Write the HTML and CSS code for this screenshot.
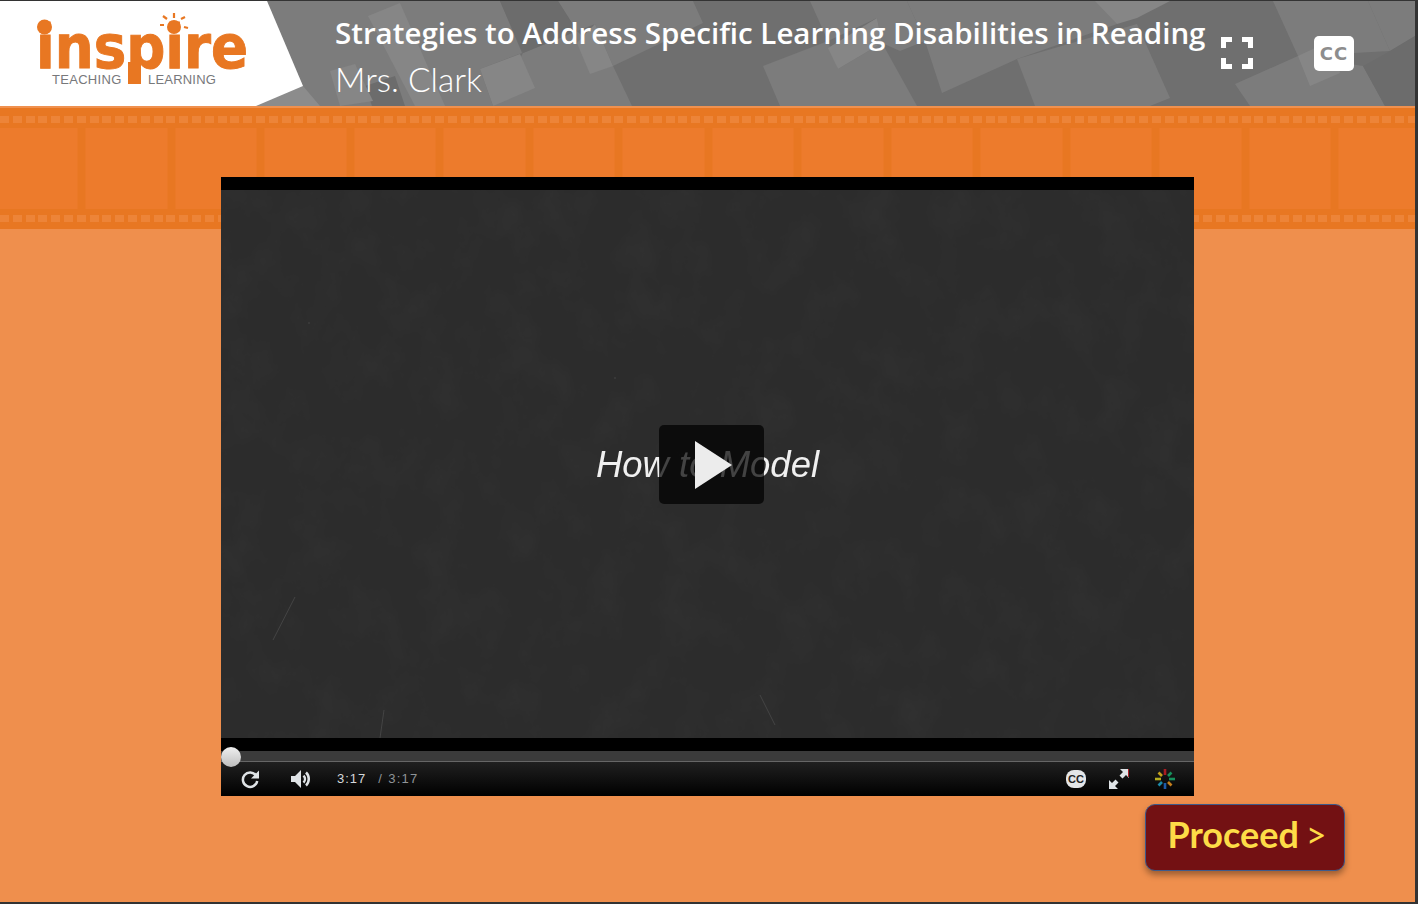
FILE: index.html
```html
<!DOCTYPE html>
<html lang="en">
<head>
<meta charset="utf-8">
<title>Strategies to Address Specific Learning Disabilities in Reading</title>
<link rel="stylesheet" href="styles.css">
</head>
<body>
<main class="stage">
  <header class="header">
    <svg class="header-art" viewBox="0 0 1415 105" aria-hidden="true">
      <g class="art-light">
        <polygon points="267,0 500,0 522,52 480,68 493,105 303,105"/>
        <polygon points="523,52 577,30 613,65 632,105 493,105"/>
        <polygon points="558,0 693,0 703,22 613,65 595,23 577,30"/>
        <polygon points="763,65 828,40 838,68 882,42 917,105 780,105"/>
        <polygon points="810,0 907,0 925,40 900,50 882,42 877,17 828,40"/>
        <polygon points="907,0 1100,0 1117,23 1017,58 942,92 925,40"/>
        <polygon points="1017,58 1137,23 1170,97 1150,105 1035,105"/>
        <polygon points="1235,83 1298,55 1363,65 1385,105 1250,105"/>
        <polygon points="1273,0 1368,0 1390,50 1298,55"/>
        <polygon points="1368,0 1415,0 1415,35 1390,50"/>
      </g>
      <g class="art-dark">
        <polygon points="365,85 395,75 405,105 372,105"/>
        <polygon points="500,0 558,0 577,30 523,52"/>
        <polygon points="1363,65 1390,50 1415,35 1415,105 1385,105"/>
      </g>
      <g class="art-bright">
        <polygon points="368,15 400,2 445,105 415,105"/>
        <polygon points="330,70 355,63 373,100 340,105"/>
        <polygon points="480,68 520,53 535,87 493,105"/>
        <polygon points="577,42 595,23 613,65 590,73"/>
        <polygon points="828,47 877,17 882,42 838,68"/>
        <polygon points="1298,55 1330,40 1340,72 1310,85"/>
        <polygon points="1095,0 1170,0 1137,17 1117,23"/>
      </g>
      <polygon class="art-facet" points="267,0 303,85 320,105 255,105"/>
      <polygon class="art-panel" points="0,0 267,0 303,85 256,105 0,105"/>
    </svg>
    <div class="logo">
      <svg class="logo-mark" viewBox="0 0 230 86" role="img" aria-label="Inspire Teaching Learning">
        <text class="logo-word" x="-1" y="56" textLength="212" lengthAdjust="spacingAndGlyphs">inspire</text>
        <circle class="logo-fill" cx="7.500" cy="15" r="7.500"/>
        <rect class="logo-fill" x="91" y="50" width="13" height="22"/>
        <circle class="logo-fill" cx="137" cy="15" r="7"/>
        <g class="logo-rays">
          <path d="M137 1v5M126 4l4 3M148 5l-4 2M123 13h4M151 16l-4-1"/>
        </g>
        <text class="logo-tag" x="15" y="72">TEACHING</text>
        <text class="logo-tag logo-tag-tight" x="111" y="72">LEARNING</text>
      </svg>
    </div>
    <div class="titles">
      <h1 class="title">Strategies to Address Specific Learning Disabilities in Reading</h1>
      <p class="presenter">Mrs. Clark</p>
    </div>
    <svg class="expand-icon" viewBox="0 0 32 32" aria-label="Fullscreen">
      <path d="M2.500 11V2.500H11M21 2.500h8.500V11M29.500 21v8.500H21M11 29.500H2.500V21"/>
    </svg>
    <div class="cc-box">CC</div>
  </header>

  <div class="film">
    <div class="perfs perfs-top"></div>
    <div class="frames"></div>
    <div class="perfs perfs-bottom"></div>
  </div>

  <section class="player">
    <div class="player-band"></div>
    <div class="board">
      <svg class="board-noise" aria-hidden="true">
        <filter id="chalk">
          <feTurbulence type="fractalNoise" baseFrequency=".025 .02" numOctaves="5" seed="7"/>
          <feColorMatrix values="0 0 0 0 1  0 0 0 0 1  0 0 0 0 1  .5 0 0 0 -.2"/>
        </filter>
        <rect width="100%" height="100%" filter="url(#chalk)" opacity=".08"/>
        <g class="scratches">
          <path d="M52 450 74 407M159 548l4-28M539 505l15 30M87 133h2M393 188h2"/>
        </g>
      </svg>
      <div class="slide-text">How to Model</div>
      <div class="play-box"><span class="play-tri"></span></div>
    </div>
    <div class="player-band"></div>
    <div class="track"><span class="thumb"></span></div>
    <div class="controls">
      <svg class="ctl ctl-replay" viewBox="0 0 20 20" aria-label="Replay">
        <path class="ctl-stroke" d="M16 6.500A7.200 7.200 0 1 0 17.200 12"/>
        <path class="ctl-fill" d="M19 1.500v8h-8z"/>
      </svg>
      <svg class="ctl ctl-volume" viewBox="0 0 20 20" aria-label="Volume">
        <path class="ctl-fill" d="M0 7h4l6-6v18l-6-6H0z"/>
        <path class="ctl-stroke" d="M12.500 6.500a5 5 0 0 1 0 7M15 3.500a9 9 0 0 1 0 13"/>
      </svg>
      <span class="time-now">3:17</span>
      <span class="time-total">/ 3:17</span>
      <span class="controls-gap"></span>
      <span class="ctl-cc">CC</span>
      <svg class="ctl ctl-full" viewBox="0 0 20 20" aria-label="Fullscreen">
        <path class="ctl-fill" d="M11 0h9v9l-3-3-3.500 3.500-3-3L14 3zM0 11l3 3 3.500-3.500 3 3L6 17l3 3H0z"/>
        <path class="ctl-red" d="M19.500 0v8"/>
      </svg>
      <svg class="ctl ctl-spin" viewBox="0 0 20 20" aria-label="Loading">
        <path stroke="#a81c22" d="M10 0v6"/>
        <path stroke="#17905c" d="M16.500 3.500 13 7"/>
        <path stroke="#17905c" d="M20 10h-6"/>
        <path stroke="#c47f1c" d="M16.500 16.500 13 13"/>
        <path stroke="#1c5aa8" d="M10 20v-6"/>
        <path stroke="#1b8aa8" d="M3.500 16.500 7 13"/>
        <path stroke="#b4ac20" d="M0 10h6"/>
        <path stroke="#c4a01c" d="M3.500 3.500 7 7"/>
      </svg>
    </div>
  </section>

  <div class="actions">
    <button class="proceed" type="button">Proceed <span class="proceed-arrow">&gt;</span></button>
  </div>
</main>
</body>
</html>
```

FILE: styles.css
```css
* { box-sizing: border-box; }

html, body {
  margin: 0;
  height: 100%;
}

body {
  background: #333;
  padding: 1px 3px 2px 0;
  overflow: hidden;
  font-family: "Open Sans", "Liberation Sans", sans-serif;
}

.stage {
  display: flex;
  flex-direction: column;
  height: 901px;
  background: #ef8f4d;
}

/* header */
.header {
  position: relative;
  display: flex;
  align-items: flex-start;
  flex: none;
  height: 105px;
  background: #6f6f6f;
  color: #fff;
}

.header-art {
  position: absolute;
  inset: 0;
  width: 100%;
  height: 100%;
}

.art-light { fill: #7c7c7c; }
.art-dark { fill: #6c6c6c; }
.art-bright { fill: #868686; }
.art-facet { fill: #8c8c8c; }
.art-panel { fill: #fff; }

.logo, .titles, .expand-icon, .cc-box {
  position: relative;
}

.logo {
  flex: none;
  width: 335px;
  padding: 11px 0 0 37px;
}

.logo-mark {
  display: block;
  width: 230px;
  height: 86px;
  overflow: visible;
}

.logo-word {
  font-family: "DejaVu Sans", sans-serif;
  font-weight: 700;
  font-size: 60px;
  fill: #e87722;
  stroke: #e87722;
  stroke-width: 1;
}

.logo-fill { fill: #e87722; }

.logo-rays path {
  fill: none;
  stroke: #e87722;
  stroke-width: 2.200;
}

.logo-tag {
  font-family: "Liberation Sans", sans-serif;
  font-size: 13px;
  letter-spacing: .3px;
  fill: #77787b;
}

.logo-tag-tight { letter-spacing: .2px; }

.titles {
  flex: none;
  width: 886px;
  padding-top: 13px;
}

.title {
  margin: 0;
  font-size: 29.500px;
  line-height: 38px;
  font-weight: 600;
  white-space: nowrap;
  font-variant-ligatures: none;
}

.presenter {
  margin: 6px 0 0;
  font-family: "Lato", sans-serif;
  font-size: 33.500px;
  line-height: 42px;
  font-weight: 300;
}

.expand-icon {
  flex: none;
  width: 32px;
  height: 32px;
  margin-top: 36px;
}

.expand-icon path {
  fill: none;
  stroke: #fff;
  stroke-width: 5;
}

.cc-box {
  flex: none;
  width: 40px;
  height: 35px;
  margin: 35px 0 0 61px;
  border-radius: 5px;
  background: #fff;
  color: #8d8d8d;
  font: 700 18px/35px "DejaVu Sans", sans-serif;
  letter-spacing: 1px;
  text-align: center;
}

/* film strip */
.film {
  flex: none;
  height: 123px;
  padding-top: 2px;
  background: #e87722;
  border-top: 2px solid #f0914f;
}

.perfs {
  height: 18px;
  background-clip: content-box;
  background-image: repeating-linear-gradient(90deg, #ed8438 0 9px, transparent 9px 12.800px);
}

.perfs-top { padding: 6px 0 5px; }

.perfs-bottom {
  height: 20px;
  padding: 6px 0 7px;
}

.frames {
  height: 81px;
  background-image: repeating-linear-gradient(90deg, #ed7b2c 0 81px, #e87722 81px 89.500px);
  background-position: -3.500px 0;
}

/* player */
.player {
  position: relative;
  display: flex;
  flex-direction: column;
  flex: none;
  width: 973px;
  height: 619px;
  margin: -52px 0 0 221px;
  background: #000;
}

.player-band {
  flex: none;
  height: 13px;
  background: #000;
}

.board {
  position: relative;
  display: flex;
  align-items: center;
  justify-content: center;
  flex: none;
  height: 548px;
  overflow: hidden;
  background: #2c2c2c;
}

.board-noise {
  position: absolute;
  inset: 0;
  width: 100%;
  height: 100%;
}

.scratches path {
  fill: none;
  stroke: #444;
  stroke-width: 1;
}

.slide-text {
  position: relative;
  top: 1px;
  font: italic 400 36.500px/44px "Liberation Sans", sans-serif;
  color: #f0f0f0;
  filter: blur(.4px);
}

.play-box {
  position: absolute;
  left: 438px;
  top: 235px;
  display: flex;
  align-items: center;
  justify-content: center;
  width: 105px;
  height: 79px;
  border-radius: 5px;
  background: rgba(0, 0, 0, .72);
}

.play-tri {
  width: 0;
  height: 0;
  margin-left: 3px;
  border-style: solid;
  border-width: 24.500px 0 24.500px 37px;
  border-color: transparent transparent transparent #ececec;
}

.track {
  position: relative;
  flex: none;
  height: 11px;
  background: #3b3b3b;
  border-bottom: 1px solid #666;
}

.thumb {
  position: absolute;
  left: 0;
  top: -4px;
  width: 20px;
  height: 20px;
  border-radius: 50%;
  background: linear-gradient(#efefef, #bdbdbd);
}

.controls {
  display: flex;
  align-items: center;
  flex: none;
  height: 34px;
  padding: 0 19px;
  background: linear-gradient(#202020, #000);
  color: #c8ccd0;
  font: 400 13px/16px "Liberation Sans", sans-serif;
  letter-spacing: 1px;
}

.ctl {
  display: block;
  flex: none;
  width: 20px;
  height: 20px;
}

.ctl-stroke {
  fill: none;
  stroke: #dfe3e6;
  stroke-width: 2.500;
}

.ctl-fill { fill: #dfe3e6; }

.ctl-red {
  fill: none;
  stroke: #a81c22;
  stroke-width: 1;
}

.ctl-volume { margin-left: 31px; }

.time-now { margin-left: 26px; color: #d5d8da; }

.time-total {
  margin-left: 12px;
  color: #8f9498;
  letter-spacing: 1.300px;
}

.controls-gap { flex: 1; }

.ctl-cc {
  flex: none;
  width: 20px;
  height: 18px;
  border-radius: 8px;
  background: #e4e6e8;
  color: #222;
  font: 700 11px/18px "Liberation Sans", sans-serif;
  letter-spacing: 0;
  text-align: center;
}

.ctl-full { margin-left: 23px; }

.ctl-spin {
  margin-left: 26px;
  fill: none;
  stroke-width: 2.600;
}

/* actions */
.actions {
  display: flex;
  justify-content: flex-end;
  padding: 8px 70px 0 0;
}

.proceed {
  width: 200px;
  height: 67px;
  padding: 0 0 7px 4px;
  border: 1px solid #3d5b8c;
  border-radius: 10px;
  background: #731113;
  box-shadow: 0 4px 6px rgba(0, 0, 0, .35);
  color: #fddc47;
  font: 700 36px/1 "Lato", sans-serif;
  word-spacing: -2px;
}

.proceed-arrow { font-weight: 400; }
```
